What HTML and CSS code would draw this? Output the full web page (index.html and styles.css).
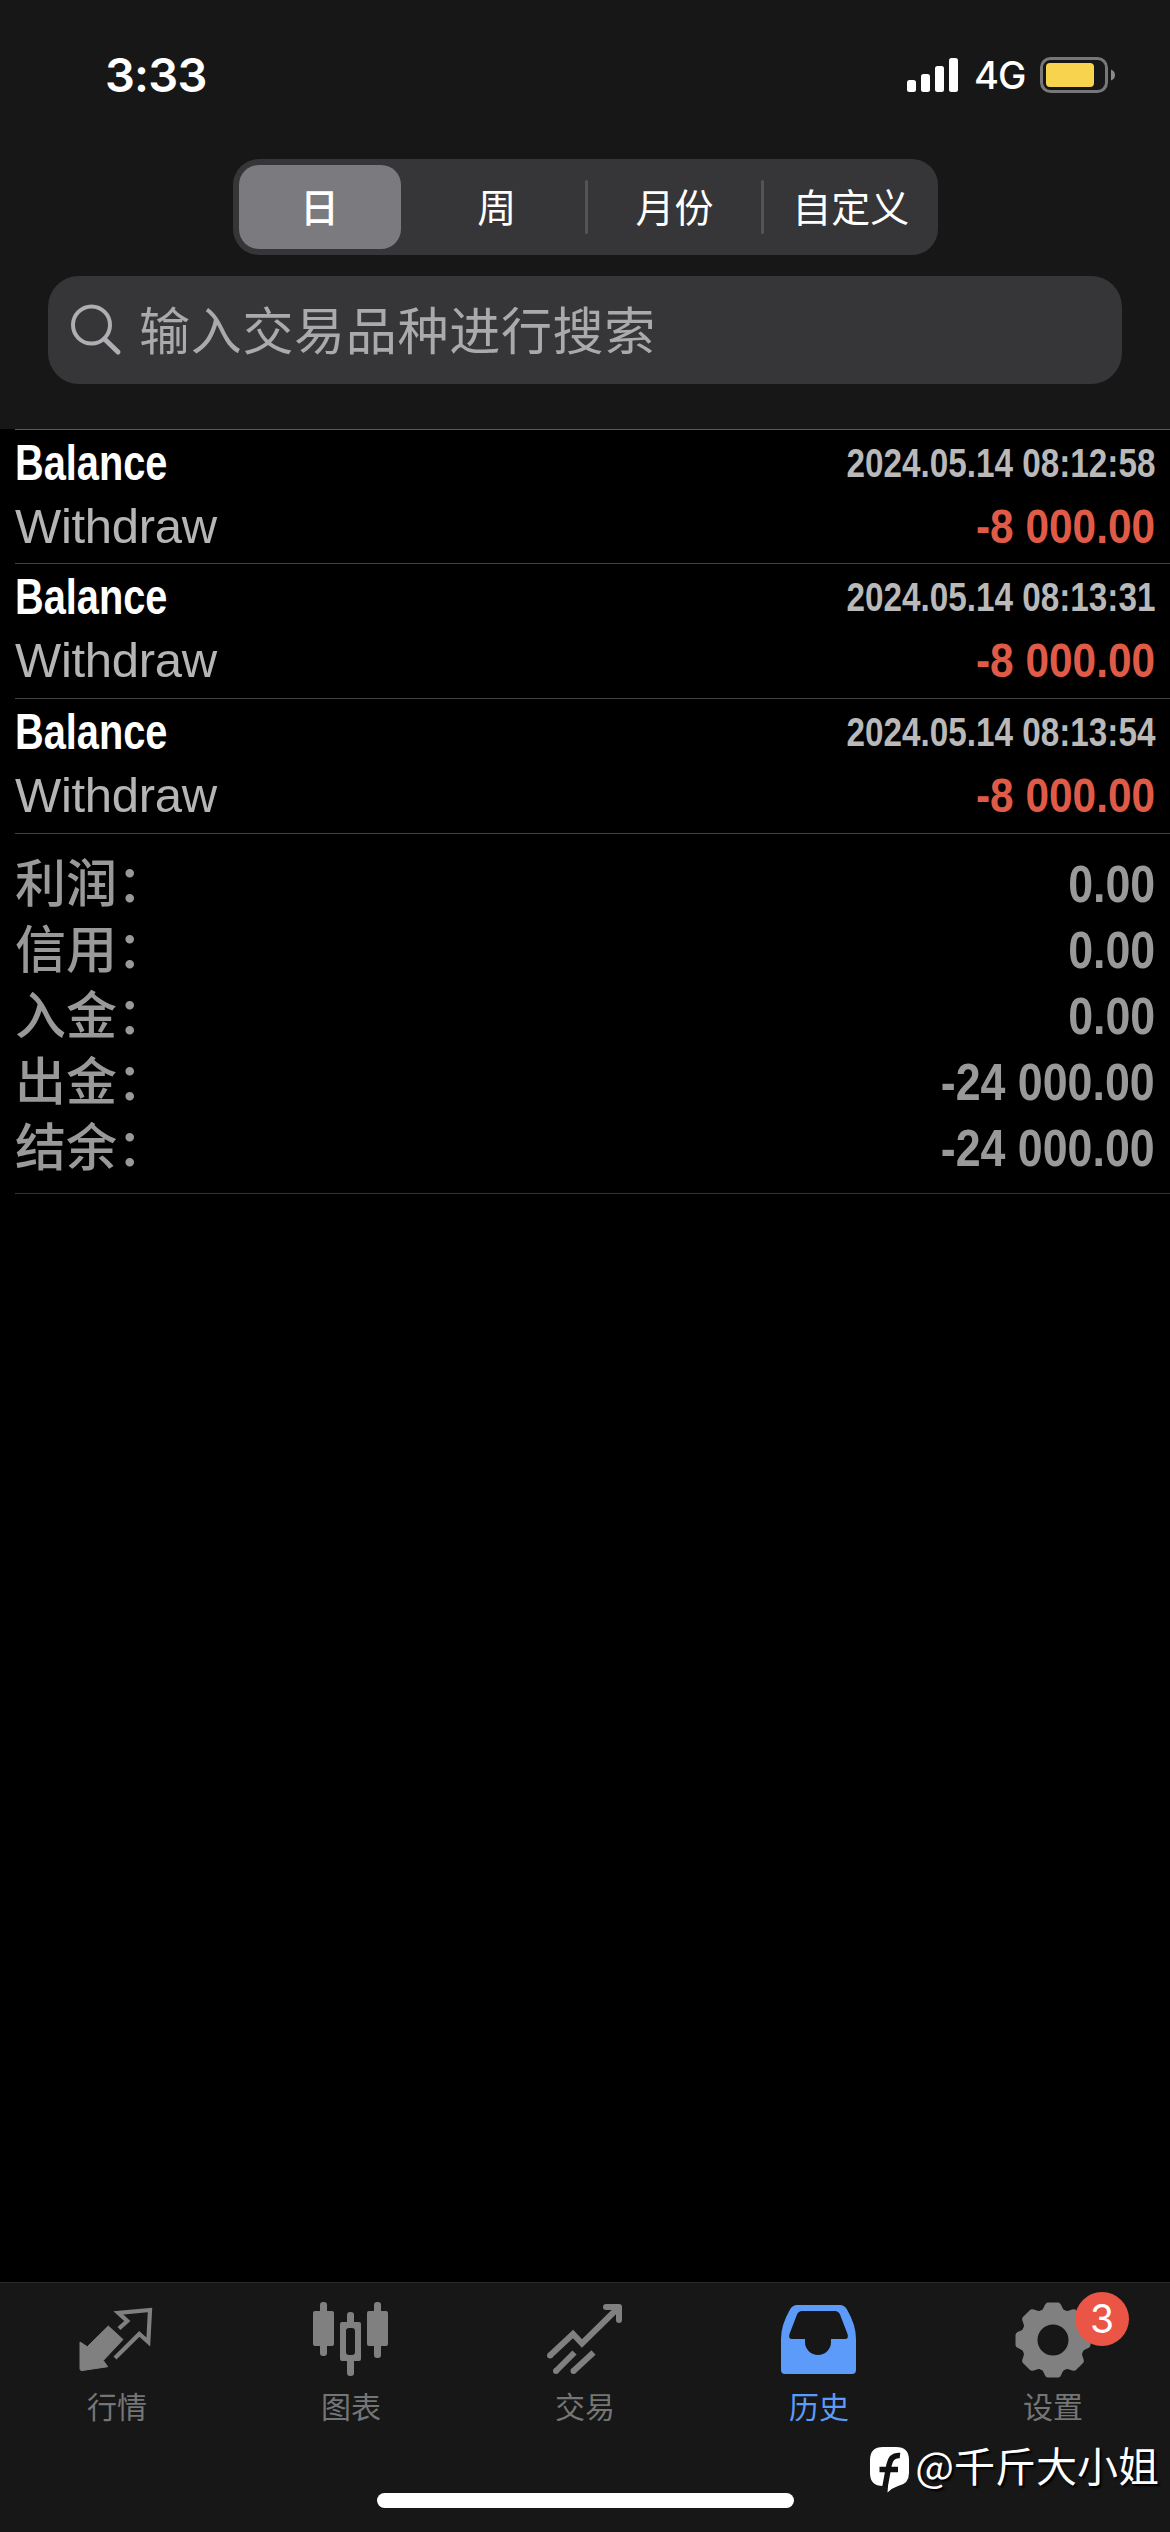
FILE: index.html
```
<!DOCTYPE html>
<html lang="zh-CN">
<head>
    <meta charset="UTF-8">
    <meta name="viewport" content="width=device-width, initial-scale=1.0">
    <title>历史</title>
    <link rel="stylesheet" href="styles.css">
</head>
<body>
    <div class="screen">
        <header class="header">
            <div class="status-bar">
                <span class="time">3:33</span>
                <div class="status-icons">
                    <svg class="signal" width="51" height="34" viewBox="0 0 51 34" fill="#fff">
                        <rect x="0" y="22" width="9" height="12" rx="2.5"/>
                        <rect x="14" y="16" width="9" height="18" rx="2.5"/>
                        <rect x="28" y="8" width="9" height="26" rx="2.5"/>
                        <rect x="42" y="0" width="9" height="34" rx="2.5"/>
                    </svg>
                    <span class="network">4G</span>
                    <svg class="battery" width="76" height="36" viewBox="0 0 76 36">
                        <rect x="1.5" y="1.5" width="65" height="33" rx="9" fill="none" stroke="#77777a" stroke-width="3"/>
                        <rect x="6" y="6" width="48" height="24" rx="4" fill="#f8d44e"/>
                        <path d="M71 12.5Q75 14 75 18T71 23.5Z" fill="#8a8a8d"/>
                    </svg>
                </div>
            </div>

            <div class="segmented">
                <div class="segment active">日</div>
                <div class="segment">周</div>
                <div class="segment divided">月份</div>
                <div class="segment divided">自定义</div>
            </div>

            <div class="search">
                <svg width="52" height="52" viewBox="0 0 52 52" fill="none" stroke="#aeaeb3" stroke-linecap="round">
                    <circle cx="21.5" cy="21" r="18.5" stroke-width="4"/>
                    <path d="M34.5 35L48 48" stroke-width="5"/>
                </svg>
                <span>输入交易品种进行搜索</span>
            </div>
        </header>

        <main class="history">
            <div class="deal">
                <div class="line"><span class="type">Balance</span><span class="date">2024.05.14 08:12:58</span></div>
                <div class="line"><span class="comment">Withdraw</span><span class="amount">-8 000.00</span></div>
            </div>
            <div class="deal">
                <div class="line"><span class="type">Balance</span><span class="date">2024.05.14 08:13:31</span></div>
                <div class="line"><span class="comment">Withdraw</span><span class="amount">-8 000.00</span></div>
            </div>
            <div class="deal">
                <div class="line"><span class="type">Balance</span><span class="date">2024.05.14 08:13:54</span></div>
                <div class="line"><span class="comment">Withdraw</span><span class="amount">-8 000.00</span></div>
            </div>

            <div class="summary">
                <div class="total"><span class="label">利润：</span><span class="value">0.00</span></div>
                <div class="total"><span class="label">信用：</span><span class="value">0.00</span></div>
                <div class="total"><span class="label">入金：</span><span class="value">0.00</span></div>
                <div class="total"><span class="label">出金：</span><span class="value">-24 000.00</span></div>
                <div class="total"><span class="label">结余：</span><span class="value">-24 000.00</span></div>
            </div>
        </main>

        <nav class="tab-bar">
            <div class="tab">
                <svg width="76" height="76" viewBox="0 0 76 76">
                    <path d="M29.3 24L44 37.5 24.3 58.5 28.7 64.7 2 68.7 1 67V40L8.3 44.7Z" fill="currentColor" stroke="currentColor" stroke-linejoin="round"/>
                    <path d="M40 26.5L48.3 19 39.3 10.8 71 8 69.3 40 60.3 32 36 56" fill="none" stroke="currentColor" stroke-width="4.2"/>
                </svg>
                <span>行情</span>
            </div>
            <div class="tab">
                <svg width="76" height="76" viewBox="0 0 76 76" fill="currentColor">
                    <rect x="0" y="9" width="21" height="35" rx="2"/>
                    <rect x="7" y="0" width="7" height="54" rx="3"/>
                    <path fill-rule="evenodd" d="M29 20H46Q48 20 48 22V57Q48 59 46 59H29Q27 59 27 57V22Q27 20 29 20ZM36 26Q33 26 33 29V50Q33 53 36 53H39Q42 53 42 50V29Q42 26 39 26Z"/>
                    <rect x="34" y="10" width="7" height="14" rx="3"/>
                    <rect x="34" y="55" width="7" height="19" rx="3"/>
                    <rect x="54" y="9" width="21" height="35" rx="2"/>
                    <rect x="61" y="0" width="7" height="56" rx="3"/>
                </svg>
                <span>图表</span>
            </div>
            <div class="tab">
                <svg width="76" height="76" viewBox="0 0 76 76" fill="none" stroke="currentColor" stroke-width="6">
                    <path d="M3 53.5L26 32 35 41.5 71 6" />
                    <path d="M59 5H72V18" stroke-linecap="round" stroke-linejoin="round"/>
                    <path d="M9 69L27.5 50.5M26.5 69L46.5 50.5"/>
                    <path d="M3 53.5h.01M9 69h.01M26.5 69h.01" stroke-linecap="round"/>
                </svg>
                <span>交易</span>
            </div>
            <div class="tab active">
                <svg width="76" height="76" viewBox="0 0 76 76" fill="currentColor">
                    <path fill-rule="evenodd" d="M16 3H59Q63.500 3 66 7.500Q75 23 75 37V68Q75 72 71 72H4Q0 72 0 68V37Q0 23 9 7.500Q11.500 3 16 3ZM21 9Q17.500 9 16 12.500L8.500 32Q7 37 11 37H24V40A13 13 0 0 0 50 40V37H64Q68 37 66.500 32L59 12.500Q57.500 9 54 9Z"/>
                </svg>
                <span>历史</span>
            </div>
            <div class="tab">
                <svg width="76" height="76" viewBox="-38 -38 76 76" fill="currentColor">
                    <defs>
                        <path id="tooth" d="M-13-29Q-10-30-9-33Q-7.500-37.500-5-37.500H5Q7.500-37.500 9-33Q10-30 13-29V-20H-13Z"/>
                    </defs>
                    <circle r="23.500" fill="none" stroke="currentColor" stroke-width="16"/>
                    <use href="#tooth"/>
                    <use href="#tooth" transform="rotate(45)"/>
                    <use href="#tooth" transform="rotate(90)"/>
                    <use href="#tooth" transform="rotate(135)"/>
                    <use href="#tooth" transform="rotate(180)"/>
                    <use href="#tooth" transform="rotate(225)"/>
                    <use href="#tooth" transform="rotate(270)"/>
                    <use href="#tooth" transform="rotate(315)"/>
                </svg>
                <span>设置</span>
                <b class="badge">3</b>
            </div>
        </nav>

        <div class="home-indicator"></div>

        <div class="watermark">
            <svg width="42" height="48" viewBox="0 0 42 48">
                <path d="M14 1H27Q40 1 40 14V27Q40 38 29 40Q23 42 18.500 46.500L19 40H14Q1 40 1 27V14Q1 1 14 1Z" fill="#fff"/>
                <path d="M31 9.500Q22 8.500 20 19L16 41M10.500 23.500H29" fill="none" stroke="#111" stroke-width="5.500"/>
            </svg>
            <span>@千斤大小姐</span>
        </div>
    </div>
</body>
</html>
```
FILE: styles.css
```
* {
    margin: 0;
    padding: 0;
    box-sizing: border-box;
}

body {
    background: #000;
    color: #fff;
    font-family: "Liberation Sans", "Noto Sans CJK SC", sans-serif;
}

svg {
    display: block;
    flex: none;
}

.screen {
    position: relative;
    display: flex;
    flex-direction: column;
    width: 1170px;
    height: 2532px;
    overflow: hidden;
}

/* header */
.header {
    height: 429px;
    background: #171717;
}

.status-bar {
    display: flex;
    justify-content: space-between;
    align-items: center;
    height: 149px;
    padding: 0 54px 0 105px;
    font-family: Inter, sans-serif;
}

.time {
    font-size: 47px;
    font-weight: 600;
    letter-spacing: -0.8px;
}

.status-icons {
    display: flex;
    align-items: center;
}

.network {
    width: 82px;
    padding-left: 16px;
    font-size: 38px;
    font-weight: 450;
    letter-spacing: -1px;
}

.segmented {
    display: grid;
    grid-template-columns: repeat(4, 1fr);
    width: 705px;
    height: 96px;
    margin: 10px auto 0;
    background: #363638;
    border-radius: 26px;
}

.segment {
    display: flex;
    align-items: center;
    justify-content: center;
    position: relative;
    padding-bottom: 4px;
    font-family: "Noto Sans CJK SC", sans-serif;
    font-size: 39px;
    line-height: 54px;
}

.segment.active {
    height: 84px;
    margin: 6px 8px 6px 6px;
    background: #7b7a7f;
    border-radius: 20px;
    font-weight: 500;
}

.segment.divided {
    padding-left: 3px;
}

.segment.divided::before {
    content: "";
    position: absolute;
    left: 0;
    top: 21px;
    width: 3px;
    height: 54px;
    border-radius: 2px;
    background: #545456;
}

.search {
    display: flex;
    align-items: center;
    height: 108px;
    margin: 21px 48px 0;
    padding-left: 22px;
    background: #363638;
    border-radius: 31px;
    color: #aaaaad;
    font-family: "Noto Sans CJK SC", sans-serif;
    font-size: 51px;
    letter-spacing: 0.7px;
}

.search span {
    margin-left: 17px;
    padding-bottom: 4px;
}

/* deals */
.history {
    flex: 1;
    padding-left: 15px;
}

.deal {
    height: 135px;
    padding: 2px 15px 0 0;
    border-top: 1px solid #424242;
}

.deal:first-child {
    height: 134px;
    border-top-color: #5a5a5a;
}

.line {
    display: flex;
    justify-content: space-between;
    line-height: 63px;
    white-space: nowrap;
}

/* condensed bold, squeezed towards the edge it is aligned to */
.type {
    font-size: 50px;
    font-weight: bold;
    transform: scaleX(0.795);
    transform-origin: left;
}

.date {
    color: #b9b9b9;
    font-size: 40px;
    font-weight: bold;
    transform: scaleX(0.832);
    transform-origin: right;
}

.comment {
    color: #b5b5b5;
    font-size: 49px;
    letter-spacing: -0.3px;
}

.amount {
    color: #df5b47;
    font-size: 49px;
    font-weight: bold;
    transform: scaleX(0.865);
    transform-origin: right;
}

.summary {
    height: 361px;
    padding: 13px 15px 0 0;
    border-top: 1px solid #424242;
    border-bottom: 1px solid #333;
}

.total {
    display: flex;
    justify-content: space-between;
    align-items: baseline;
    height: 66px;
    color: #999;
    line-height: 66px;
}

.label {
    font-family: "Noto Sans CJK SC", sans-serif;
    font-size: 51px;
    font-weight: 500;
}

.value {
    font-size: 52px;
    font-weight: bold;
    transform: scaleX(0.86);
    transform-origin: right;
}

/* bottom tabs */
.tab-bar {
    display: grid;
    grid-template-columns: repeat(5, 234px);
    height: 250px;
    background: #171717;
    border-top: 1px solid #2b2b2b;
}

.tab {
    position: relative;
    display: flex;
    flex-direction: column;
    align-items: center;
    padding-top: 19px;
    color: #808080;
    font-family: "Noto Sans CJK SC", sans-serif;
    font-size: 30px;
    line-height: 40px;
}

.tab span {
    margin-top: 7px;
    color: #757575;
}

.tab.active,
.tab.active span {
    color: #5c9bfa;
}

.badge {
    position: absolute;
    left: 139px;
    top: 9px;
    width: 54px;
    height: 54px;
    border-radius: 50%;
    background: #eb5545;
    color: #fff;
    font: 400 39px/54px Inter, sans-serif;
    text-align: center;
}

.home-indicator {
    position: absolute;
    left: 377px;
    bottom: 24px;
    width: 417px;
    height: 15px;
    border-radius: 8px;
    background: #fff;
}

.watermark {
    position: absolute;
    right: 11px;
    bottom: 38px;
    display: flex;
    align-items: flex-end;
    gap: 4px;
    font-family: "Noto Sans CJK SC", sans-serif;
    font-size: 41px;
    line-height: 54px;
    text-shadow: 2px 2px 2px #000;
}

.watermark span {
    padding-bottom: 3px;
}
```
